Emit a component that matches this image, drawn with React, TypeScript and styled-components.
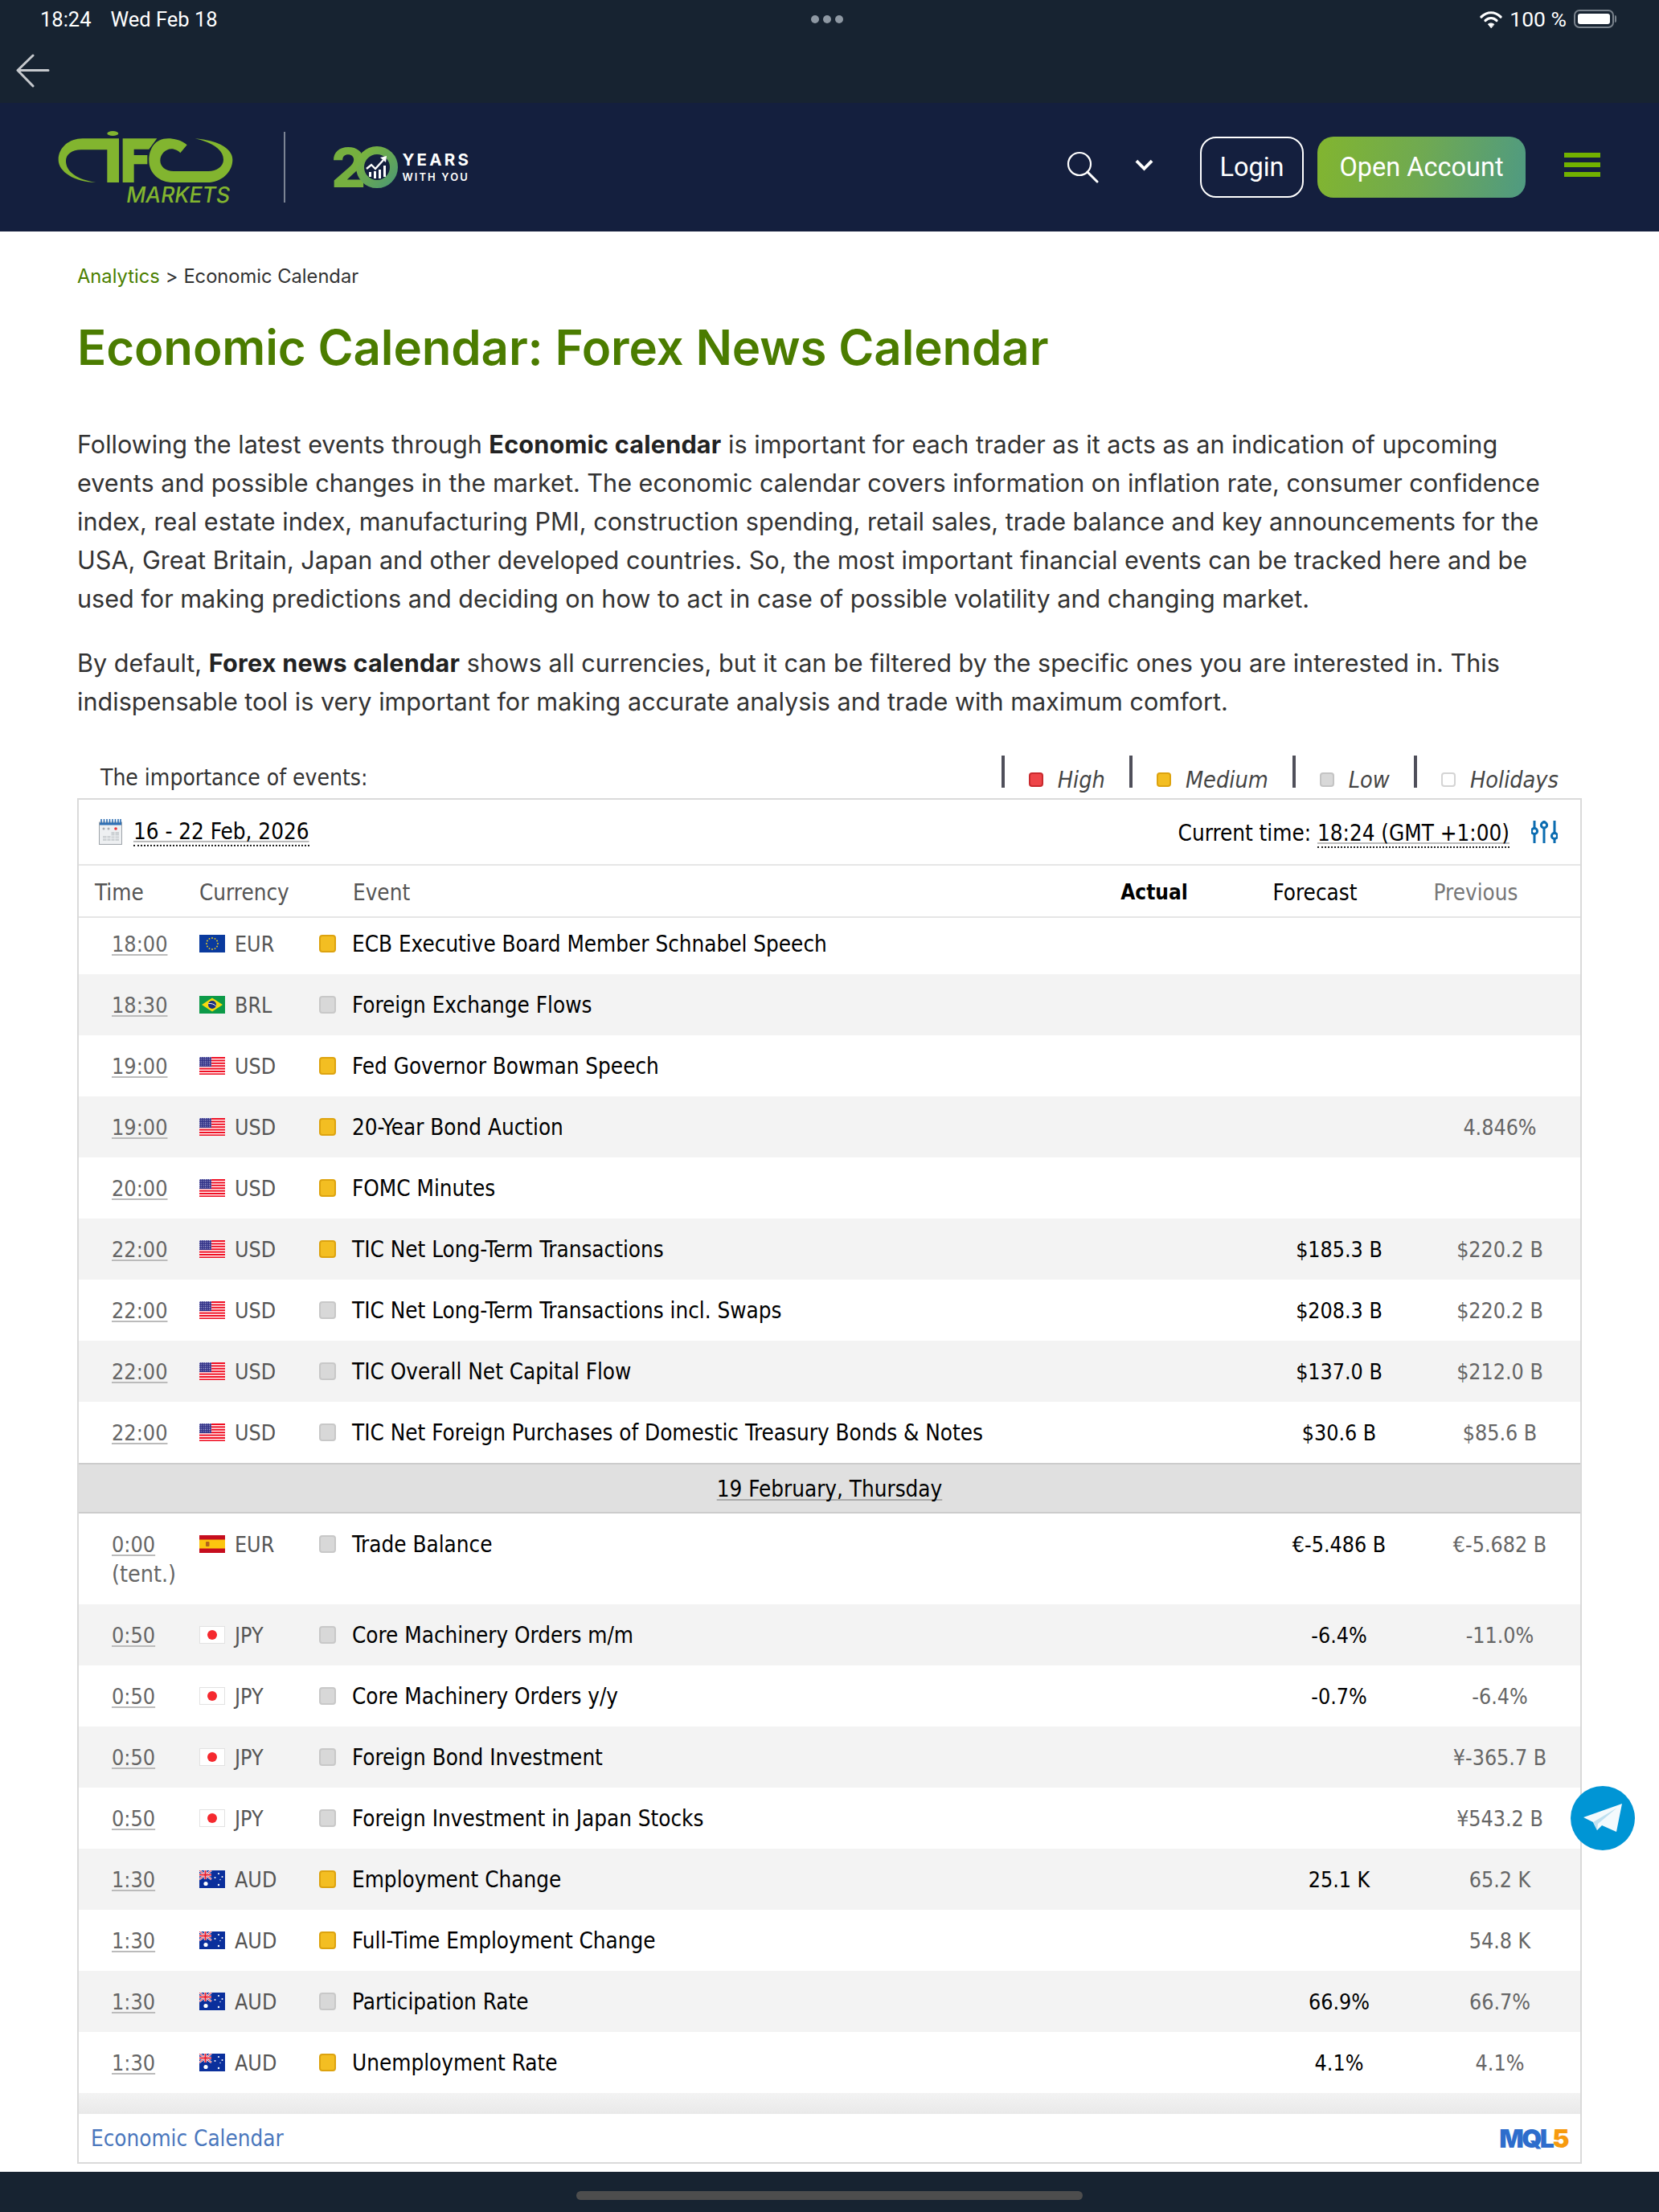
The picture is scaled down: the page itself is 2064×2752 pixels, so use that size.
import { createGlobalStyle, styled } from "styled-components";

type FlagCode = "eu" | "br" | "us" | "es" | "jp" | "au";
type Level = "medium" | "low";

interface CalendarEvent {
  time: string;
  tentative?: boolean;
  flag: FlagCode;
  currency: string;
  level: Level;
  name: string;
  forecast?: string;
  previous?: string;
}

const firstDay: CalendarEvent[] = [
  { time: "18:00", flag: "eu", currency: "EUR", level: "medium", name: "ECB Executive Board Member Schnabel Speech" },
  { time: "18:30", flag: "br", currency: "BRL", level: "low", name: "Foreign Exchange Flows" },
  { time: "19:00", flag: "us", currency: "USD", level: "medium", name: "Fed Governor Bowman Speech" },
  { time: "19:00", flag: "us", currency: "USD", level: "medium", name: "20-Year Bond Auction", previous: "4.846%" },
  { time: "20:00", flag: "us", currency: "USD", level: "medium", name: "FOMC Minutes" },
  { time: "22:00", flag: "us", currency: "USD", level: "medium", name: "TIC Net Long-Term Transactions", forecast: "$185.3 B", previous: "$220.2 B" },
  { time: "22:00", flag: "us", currency: "USD", level: "low", name: "TIC Net Long-Term Transactions incl. Swaps", forecast: "$208.3 B", previous: "$220.2 B" },
  { time: "22:00", flag: "us", currency: "USD", level: "low", name: "TIC Overall Net Capital Flow", forecast: "$137.0 B", previous: "$212.0 B" },
  { time: "22:00", flag: "us", currency: "USD", level: "low", name: "TIC Net Foreign Purchases of Domestic Treasury Bonds & Notes", forecast: "$30.6 B", previous: "$85.6 B" },
];

const secondDay: CalendarEvent[] = [
  { time: "0:00", tentative: true, flag: "es", currency: "EUR", level: "low", name: "Trade Balance", forecast: "€-5.486 B", previous: "€-5.682 B" },
  { time: "0:50", flag: "jp", currency: "JPY", level: "low", name: "Core Machinery Orders m/m", forecast: "-6.4%", previous: "-11.0%" },
  { time: "0:50", flag: "jp", currency: "JPY", level: "low", name: "Core Machinery Orders y/y", forecast: "-0.7%", previous: "-6.4%" },
  { time: "0:50", flag: "jp", currency: "JPY", level: "low", name: "Foreign Bond Investment", previous: "¥-365.7 B" },
  { time: "0:50", flag: "jp", currency: "JPY", level: "low", name: "Foreign Investment in Japan Stocks", previous: "¥543.2 B" },
  { time: "1:30", flag: "au", currency: "AUD", level: "medium", name: "Employment Change", forecast: "25.1 K", previous: "65.2 K" },
  { time: "1:30", flag: "au", currency: "AUD", level: "medium", name: "Full-Time Employment Change", previous: "54.8 K" },
  { time: "1:30", flag: "au", currency: "AUD", level: "low", name: "Participation Rate", forecast: "66.9%", previous: "66.7%" },
  { time: "1:30", flag: "au", currency: "AUD", level: "medium", name: "Unemployment Rate", forecast: "4.1%", previous: "4.1%" },
];

const legend = [
  { label: "High", bg: "#ee4549", line: "#c92a2e" },
  { label: "Medium", bg: "#f3be22", line: "#dda30f" },
  { label: "Low", bg: "#d8d8d8", line: "#c4c4c4" },
  { label: "Holidays", bg: "#ffffff", line: "#d4d4d4" },
];

function Flag({ code }: { code: FlagCode }) {
  return (
    <FlagSvg viewBox="0 0 32 22">
      {code === "eu" && (
        <>
          <rect width="32" height="22" fill="#0a3a9e" />
          {[0, 1, 2, 3, 4, 5, 6, 7, 8, 9, 10, 11].map((i) => (
            <circle
              key={i}
              cx={16 + 7 * Math.cos((i * Math.PI) / 6)}
              cy={11 + 7 * Math.sin((i * Math.PI) / 6)}
              r="0.9"
              fill="#f7d417"
            />
          ))}
        </>
      )}
      {code === "br" && (
        <>
          <rect width="32" height="22" fill="#0c9a48" />
          <path d="M16 2.5 29 11 16 19.5 3 11Z" fill="#f5d90f" />
          <circle cx="16" cy="11" r="5" fill="#1d2f7c" />
          <path d="M11.3 9.6c3.5-.5 6.9.6 9.3 3" stroke="#fff" strokeWidth="1" fill="none" />
        </>
      )}
      {code === "us" && (
        <>
          <rect width="32" height="22" fill="#fff" />
          {[0, 1, 2, 3, 4, 5, 6].map((r) => (
            <rect key={r} y={r * 3.4} width="32" height="2" fill="#f00f23" />
          ))}
          <rect width="15" height="12" fill="#2f2f86" />
          <rect width="15" height="12" fill="url(#usStars)" />
        </>
      )}
      {code === "es" && (
        <>
          <rect width="32" height="22" fill="#c60d1e" />
          <rect y="5.5" width="32" height="11" fill="#fcc60f" />
          <rect x="8" y="8" width="4.5" height="6" rx="1" fill="#b3631c" />
        </>
      )}
      {code === "jp" && (
        <>
          <rect x="0.5" y="0.5" width="31" height="21" fill="#fff" stroke="#e2e2e2" />
          <circle cx="16" cy="11" r="6" fill="#f5292f" />
        </>
      )}
      {code === "au" && (
        <>
          <rect width="32" height="22" fill="#0a2f9c" />
          <path d="M0 0 15 11M15 0 0 11" stroke="#fff" strokeWidth="2.4" />
          <path d="M0 0 15 11M15 0 0 11" stroke="#e51c2e" strokeWidth="1" />
          <path d="M7.5 0v11M0 5.5h15" stroke="#fff" strokeWidth="3.4" />
          <path d="M7.5 0v11M0 5.5h15" stroke="#e51c2e" strokeWidth="2" />
          <circle cx="8" cy="16.5" r="2.6" fill="#fff" />
          <circle cx="24" cy="4" r="1.1" fill="#fff" />
          <circle cx="19.5" cy="9" r="1" fill="#fff" />
          <circle cx="28.5" cy="8" r="1" fill="#fff" />
          <circle cx="24" cy="18" r="1.2" fill="#fff" />
          <circle cx="26" cy="11.5" r="0.7" fill="#fff" />
        </>
      )}
    </FlagSvg>
  );
}

function EventRow({ event, alt, first }: { event: CalendarEvent; alt: boolean; first?: boolean }) {
  return (
    <Row $alt={alt} $first={first}>
      <TimeCell>
        <TimeLink>{event.time}</TimeLink>
        {event.tentative && <Tentative>(tent.)</Tentative>}
      </TimeCell>
      <CurrencyCell>
        <Flag code={event.flag} />
        {event.currency}
      </CurrencyCell>
      <LevelCell>
        <LevelBox $level={event.level} />
      </LevelCell>
      <div>{event.name}</div>
      <Forecast>{event.forecast}</Forecast>
      <Previous>{event.previous}</Previous>
    </Row>
  );
}

export default function App() {
  return (
    <Page>
      <GlobalStyle />
      <Chrome>
        <StatusRow>
          <StatusLeft>
            <span>18:24</span>
            <span>Wed Feb 18</span>
          </StatusLeft>
          <StatusDots>
            <i />
            <i />
            <i />
          </StatusDots>
          <StatusRight>
            <svg width="28" height="24" viewBox="0 0 28 24" fill="none" stroke="#fff" strokeLinecap="round">
              <path d="M2 9c7-7 17-7 24 0" strokeWidth="3.2" />
              <path d="M7 13.5c4-4 10-4 14 0" strokeWidth="3.2" />
              <path d="M14 22.5l-3.6-4.4c2-1.6 5.2-1.6 7.2 0Z" fill="#fff" strokeWidth="1" />
            </svg>
            <span>100 %</span>
            <Battery>
              <BatteryLevel />
            </Battery>
          </StatusRight>
        </StatusRow>
        <BackRow>
          <svg width="42" height="42" viewBox="0 0 42 42" fill="none" stroke="#c6c9cd" strokeWidth="3" strokeLinecap="round" strokeLinejoin="round">
            <path d="M40 20.5H3M21 2 2 20.5 21 40" />
          </svg>
        </BackRow>
      </Chrome>

      <Nav>
        <LogoBlock>
          <svg width="218" height="64" viewBox="38 38 654 192" fill="#82b52f">
            <ellipse cx="243" cy="47" rx="21" ry="9" />
            <path d="M266 66H130C80 66 40 100 40 145c0 45 60 83 140 85-70-10-112-40-112-80 0-25 22-42 57-42h97v122h44Z" />
            <path d="M280 66H408L378 106H322V128H372V162H322V230H280Z" />
            <path d="M520 90C500 72 470 66 450 66 400 66 378 105 378 148c0 47 37 82 92 82H595c55 0 95-40 95-85C690 100 630 72 550 66c60 14 106 39 106 79 0 25-26 43-56 43H470c-30 0-50-18-50-40 0-23 20-43 42-43 13 0 26 7 33 15Z" />
          </svg>
          <MarketsText>MARKETS</MarketsText>
        </LogoBlock>
        <NavDivider />
        <Anniversary>
          <TwentyDigit>2</TwentyDigit>
          <svg width="52" height="52" viewBox="0 0 52 52">
            <defs>
              <linearGradient id="ring" x1="0" y1="0" x2="1" y2="1">
                <stop offset="0" stopColor="#7db53a" />
                <stop offset="1" stopColor="#4f9a70" />
              </linearGradient>
            </defs>
            <circle cx="26" cy="26" r="21" fill="none" stroke="url(#ring)" strokeWidth="10" />
            <path d="M13 28l6-5 5 5 10-11" fill="none" stroke="#fff" strokeWidth="2.4" />
            <path d="M38 12l-1 8-7-6Z" fill="#fff" />
            <path d="M16 32h3v6h-3zM22 31h3v9h-3zM28 29h3v11h-3zM34 24h3v14h-3z" fill="#fff" />
          </svg>
          <YearsBlock>
            <YearsText>YEARS</YearsText>
            <WithYouText>WITH YOU</WithYouText>
          </YearsBlock>
        </Anniversary>
        <NavRight>
          <svg width="40" height="40" viewBox="0 0 40 40" fill="none" stroke="#fff" strokeWidth="2.2" strokeLinecap="round">
            <ellipse cx="16" cy="16" rx="14" ry="14" />
            <path d="M26 26 38 38" strokeWidth="3" />
          </svg>
          <ChevronIcon viewBox="0 0 24 15" fill="none" stroke="#fff" strokeWidth="4" strokeLinejoin="miter">
            <path d="M2 2 12 12 22 2" />
          </ChevronIcon>
          <LoginButton>Login</LoginButton>
          <OpenButton>Open Account</OpenButton>
          <Burger>
            <i />
            <i />
            <i />
          </Burger>
        </NavRight>
      </Nav>

      <Main>
        <Breadcrumb>
          <BreadcrumbLink>Analytics</BreadcrumbLink>
          <span>&gt;</span>
          <span>Economic Calendar</span>
        </Breadcrumb>
        <Title>Economic Calendar: Forex News Calendar</Title>
        <Lead>
          Following the latest events through <b>Economic calendar</b> is important for each trader as it acts as an
          indication of upcoming events and possible changes in the market. The economic calendar covers information on
          inflation rate, consumer confidence index, real estate index, manufacturing PMI, construction spending, retail
          sales, trade balance and key announcements for the USA, Great Britain, Japan and other developed countries. So,
          the most important financial events can be tracked here and be used for making predictions and deciding on how
          to act in case of possible volatility and changing market.
        </Lead>
        <Lead $second>
          By default, <b>Forex news calendar</b> shows all currencies, but it can be filtered by the specific ones you are
          interested in. This indispensable tool is very important for making accurate analysis and trade with maximum
          comfort.
        </Lead>

        <ImportanceRow>
          <ImportanceLabel>The importance of events:</ImportanceLabel>
          <Legend>
            {legend.map((item) => (
              <LegendItem key={item.label}>
                <LegendBox $bg={item.bg} $line={item.line} />
                <LegendText>{item.label}</LegendText>
              </LegendItem>
            ))}
          </Legend>
        </ImportanceRow>

        <Frame>
          <Toolbar>
            <CalendarIcon viewBox="0 0 29 32">
              <rect x="0.5" y="4" width="28" height="27.5" fill="#eef0f2" stroke="#9da3a9" />
              <path d="M1 6h27" stroke="#2f6fb4" strokeWidth="3" />
              <path d="M3 0v6M6.5 0v6M10 0v6M13.5 0v6M17 0v6M20.5 0v6M24 0v6M27 0v6" stroke="#2f6fb4" strokeWidth="1.6" />
              <circle cx="21" cy="12" r="1.8" fill="#e8333a" />
              <circle cx="6" cy="12" r="1.5" fill="#a9adb2" />
              <circle cx="12" cy="12" r="1.5" fill="#a9adb2" />
              <path d="M15 16h10v11H5v-6h10Z" fill="#cdd1d4" />
              <path d="M5 24h20M10 21v6M15 16v11M20 16v11M15 21h10" stroke="#eef0f2" strokeWidth="1" />
            </CalendarIcon>
            <DateLink>16 - 22 Feb, 2026</DateLink>
            <CurrentTime>
              Current time: <DateLink>18:24 (GMT +1:00)</DateLink>
            </CurrentTime>
            <SlidersIcon viewBox="0 0 33 30" fill="none" stroke="#0b6cb0" strokeWidth="3">
              <path d="M4 1v9M4 18v11M16 1v1M16 11v18M29 1v15M29 24v5" />
              <circle cx="4" cy="14" r="3.6" />
              <circle cx="16" cy="6.5" r="3.6" />
              <circle cx="29" cy="20" r="3.6" />
            </SlidersIcon>
          </Toolbar>
          <HeaderRow>
            <HeaderMuted>Time</HeaderMuted>
            <HeaderMuted>Currency</HeaderMuted>
            <HeaderMuted>Event</HeaderMuted>
            <HeaderValue $strong>Actual</HeaderValue>
            <HeaderValue>Forecast</HeaderValue>
            <HeaderValue $muted>Previous</HeaderValue>
          </HeaderRow>
          {firstDay.map((event, i) => (
            <EventRow key={event.name} event={event} alt={i % 2 === 1} first={i === 0} />
          ))}
          <DayRow>
            <DayLabel>19 February, Thursday</DayLabel>
          </DayRow>
          {secondDay.map((event, i) => (
            <EventRow key={event.name} event={event} alt={i % 2 === 1} />
          ))}
          <FadeRow />
          <FrameFooter>
            <FooterLink>Economic Calendar</FooterLink>
            <MqlMark>
              MQL<MqlFive>5</MqlFive>
            </MqlMark>
          </FrameFooter>
        </Frame>
      </Main>

      <BottomBar>
        <HomeIndicator />
      </BottomBar>

      <TelegramButton>
        <svg width="80" height="80" viewBox="0 0 80 80">
          <path d="M64 22 16 39l12 6 5 10 6-6 18 8Z" fill="#f4fafd" />
          <path d="M28 45 58 27 34 47l-1 8Z" fill="#bfe0f0" />
        </svg>
      </TelegramButton>
      <HiddenDefs width="0" height="0">
        <defs>
          <pattern id="usStars" width="2.4" height="2.4" patternUnits="userSpaceOnUse">
            <rect width="1" height="1" fill="#d8d8f0" />
          </pattern>
        </defs>
      </HiddenDefs>
    </Page>
  );
}

const GlobalStyle = createGlobalStyle`
  html, body {
    margin: 0;
    padding: 0;
    background: #fff;
  }
  * {
    box-sizing: border-box;
  }
`;

const HiddenDefs = styled.svg`
  position: absolute;
`;

const Page = styled.div`
  position: relative;
  width: 2064px;
  height: 2752px;
  overflow: hidden;
  display: flex;
  flex-direction: column;
  background: #fff;
  font-family: Inter, "Liberation Sans", sans-serif;
`;

const Chrome = styled.div`
  height: 128px;
  background: #172331;
`;

const StatusRow = styled.div`
  height: 47px;
  padding: 0 56px 0 50px;
  display: grid;
  grid-template-columns: 1fr auto 1fr;
  align-items: center;
  color: #fff;
  font-family: Roboto, sans-serif;
  font-size: 25.5px;
`;

const StatusLeft = styled.div`
  display: flex;
  gap: 24px;
`;

const StatusDots = styled.div`
  display: flex;
  gap: 5px;
  i {
    width: 10px;
    height: 10px;
    border-radius: 50%;
    background: #8e98a3;
  }
`;

const StatusRight = styled.div`
  display: flex;
  justify-content: flex-end;
  align-items: center;
  gap: 9px;
  font-size: 26.5px;
`;

const Battery = styled.div`
  position: relative;
  width: 50px;
  height: 23px;
  padding: 3px;
  border: 2px solid #79828c;
  border-radius: 7px;
  &::after {
    content: "";
    position: absolute;
    right: -5px;
    top: 5px;
    width: 2px;
    height: 9px;
    border-radius: 0 2px 2px 0;
    background: #79828c;
  }
`;

const BatteryLevel = styled.div`
  height: 100%;
  background: #fff;
  border-radius: 3px;
`;

const BackRow = styled.div`
  height: 81px;
  padding: 20px 0 0 20px;
`;

const Nav = styled.header`
  height: 160px;
  background: #141f3e;
  padding: 0 73px 0 72px;
  display: flex;
  align-items: center;
`;

const LogoBlock = styled.div`
  width: 218px;
  display: flex;
  flex-direction: column;
  align-items: flex-end;
`;

const MarketsText = styled.div`
  margin: 4px 4px 0 0;
  font-style: italic;
  font-weight: 500;
  font-size: 26.5px;
  line-height: 22px;
  color: #82b52f;
`;

const NavDivider = styled.div`
  width: 2px;
  height: 88px;
  margin-left: 63px;
  background: #7c8494;
`;

const Anniversary = styled.div`
  margin-left: 57px;
  display: flex;
  align-items: center;
`;

const TwentyDigit = styled.span`
  font-weight: 800;
  font-size: 68px;
  line-height: 60px;
  color: #76b03f;
  margin-right: -12px;
`;

const YearsBlock = styled.div`
  margin-left: 5px;
  color: #fff;
`;

const YearsText = styled.div`
  font-size: 20.5px;
  font-weight: 700;
  line-height: 24px;
  letter-spacing: 3.2px;
`;

const WithYouText = styled.div`
  font-size: 13px;
  font-weight: 600;
  line-height: 18px;
  letter-spacing: 2.1px;
`;

const NavRight = styled.div`
  margin-left: auto;
  display: flex;
  align-items: center;
`;

const ChevronIcon = styled.svg`
  width: 23px;
  height: 15px;
  margin: -6px 58px 0 45px;
`;

const LoginButton = styled.button`
  width: 129px;
  height: 76px;
  padding: 0;
  background: transparent;
  border: 2px solid #fff;
  border-radius: 20px;
  color: #fff;
  font-family: Roboto, sans-serif;
  font-size: 32.5px;
`;

const OpenButton = styled.button`
  width: 259px;
  height: 76px;
  margin-left: 17px;
  padding: 0;
  border: 0;
  border-radius: 20px;
  background: linear-gradient(100deg, #82b52f 0%, #6fa952 50%, #4f9a82 100%);
  color: #fff;
  font-family: Roboto, sans-serif;
  font-size: 32.5px;
`;

const Burger = styled.div`
  width: 45px;
  margin: -6px 0 0 48px;
  display: flex;
  flex-direction: column;
  gap: 6px;
  i {
    height: 6px;
    background: #72b200;
  }
`;

const Main = styled.main`
  flex: 1;
  padding: 40px 96px 10px;
`;

const Breadcrumb = styled.div`
  display: flex;
  gap: 7px;
  font-size: 23.7px;
  line-height: 32px;
  color: #333;
`;

const BreadcrumbLink = styled.span`
  color: #4b7f00;
`;

const Title = styled.h1`
  margin: 36px 0 0;
  font-size: 60px;
  line-height: 72px;
  font-weight: 600;
  letter-spacing: -0.15px;
  color: #4b7c00;
`;

const Lead = styled.p<{ $second?: boolean }>`
  margin: ${(p) => (p.$second ? "32px" : "61px")} 0 0;
  max-width: 1860px;
  font-size: 30.6px;
  line-height: 48px;
  color: #333;
  b {
    font-weight: 700;
    letter-spacing: 0.2px;
    color: #222;
  }
`;

const ImportanceRow = styled.div`
  margin-top: 40px;
  height: 56px;
  padding: 3px 29px 0;
  display: flex;
  justify-content: space-between;
`;

const tableFont = `"DejaVu Sans Condensed", "DejaVu Sans", sans-serif`;

const ImportanceLabel = styled.div`
  font-family: ${tableFont};
  font-size: 28px;
  line-height: 56px;
  color: #333;
`;

const Legend = styled.div`
  display: flex;
  gap: 30px;
`;

const LegendItem = styled.div`
  height: 40px;
  padding: 20px 0 0 30px;
  border-left: 4px solid #4f4f5a;
  display: flex;
  align-items: center;
  gap: 18px;
`;

const LegendBox = styled.span<{ $bg: string; $line: string }>`
  width: 18px;
  height: 18px;
  border-radius: 4px;
  background: ${(p) => p.$bg};
  border: 2px solid ${(p) => p.$line};
`;

const LegendText = styled.span`
  font-family: ${tableFont};
  font-style: italic;
  font-size: 28.6px;
  line-height: 20px;
  color: #444;
`;

const Frame = styled.section`
  border: 2px solid #dadada;
  font-family: ${tableFont};
  font-size: 27.6px;
  line-height: 37px;
  color: #000;
`;

const Toolbar = styled.div`
  height: 82px;
  padding: 2px 28px 0 25px;
  border-bottom: 2px solid #e6e6e6;
  display: flex;
  align-items: center;
`;

const CalendarIcon = styled.svg`
  width: 29px;
  height: 32px;
  margin: -2px 14px 0 0;
`;

const DateLink = styled.span`
  display: inline-block;
  line-height: 32px;
  border-bottom: 2px dotted #222;
  text-decoration: underline;
  text-decoration-color: #bbb;
  text-decoration-skip-ink: none;
  text-underline-offset: 2px;
`;

const CurrentTime = styled.div`
  margin-left: auto;
`;

const SlidersIcon = styled.svg`
  width: 33px;
  height: 30px;
  margin: -2px 0 0 27px;
`;

const HeaderRow = styled.div`
  height: 65px;
  padding: 3px 30px 0 20px;
  border-bottom: 2px solid #e6e6e6;
  display: grid;
  grid-template-columns: 130px 191px 1fr 200px 200px 200px;
  align-items: center;
`;

const HeaderMuted = styled.div`
  color: #555;
`;

const HeaderValue = styled.div<{ $strong?: boolean; $muted?: boolean }>`
  text-align: center;
  font-size: ${(p) => (p.$strong ? "26px" : "inherit")};
  font-weight: ${(p) => (p.$strong ? 700 : 400)};
  color: ${(p) => (p.$muted ? "#777" : "#000")};
`;

const Row = styled.div<{ $alt: boolean; $first?: boolean }>`
  padding: ${(p) => (p.$first ? "14px" : "20px")} 0 19px 41px;
  background: ${(p) => (p.$alt ? "#f3f3f3" : "#fff")};
  display: grid;
  grid-template-columns: 109px 149px 41px 1fr 200px 200px;
`;

const TimeCell = styled.div`
  font-size: 26.8px;
  color: #666;
`;

const TimeLink = styled.span`
  text-decoration: underline;
  text-decoration-color: #bbb;
  text-decoration-thickness: 2px;
  text-decoration-skip-ink: none;
  text-underline-offset: 3px;
`;

const Tentative = styled.div`
  font-size: 28.4px;
`;

const CurrencyCell = styled.div`
  height: 37px;
  display: flex;
  align-items: center;
  gap: 12px;
  font-size: 26.6px;
  color: #555;
`;

const FlagSvg = styled.svg`
  width: 32px;
  height: 22px;
  margin-top: -2px;
`;

const LevelCell = styled.div`
  height: 37px;
  display: flex;
  align-items: center;
`;

const LevelBox = styled.span<{ $level: Level }>`
  width: 21px;
  height: 22px;
  margin-top: -2px;
  border-radius: 4px;
  border: 2px solid ${(p) => (p.$level === "medium" ? "#dda30f" : "#c8c8c8")};
  background: ${(p) => (p.$level === "medium" ? "#f3be22" : "#d8d8d8")};
`;

const Forecast = styled.div`
  text-align: center;
  font-size: 26.6px;
`;

const Previous = styled.div`
  text-align: center;
  font-size: 26.6px;
  color: #666;
`;

const DayRow = styled.div`
  height: 63px;
  padding-top: 2px;
  background: #e0e0e0;
  border-top: 2px solid #ccc;
  border-bottom: 2px solid #ccc;
  display: flex;
  align-items: center;
  justify-content: center;
`;

const DayLabel = styled.span`
  text-decoration: underline;
  text-decoration-color: #aaa;
  text-decoration-skip-ink: none;
  text-underline-offset: 3px;
`;

const FadeRow = styled.div`
  height: 26px;
  background: linear-gradient(#f3f3f3, #e9e9e9);
`;

const FrameFooter = styled.div`
  height: 60px;
  padding: 0 16px 0 15px;
  display: flex;
  align-items: center;
  justify-content: space-between;
`;

const FooterLink = styled.span`
  color: #4a77bd;
`;

const MqlMark = styled.span`
  font-family: Inter, sans-serif;
  font-weight: 900;
  font-size: 32px;
  letter-spacing: -2.6px;
  color: #2e6dcc;
`;

const MqlFive = styled.span`
  color: #f79a0e;
`;

const BottomBar = styled.footer`
  height: 50px;
  background: #172331;
  padding-top: 24px;
`;

const HomeIndicator = styled.div`
  width: 630px;
  height: 11px;
  margin: 0 auto;
  border-radius: 6px;
  background: #4d4d4d;
`;

const TelegramButton = styled.div`
  position: absolute;
  left: 1954px;
  top: 2222px;
  width: 80px;
  height: 80px;
  border-radius: 50%;
  background: #0095d5;
`;
